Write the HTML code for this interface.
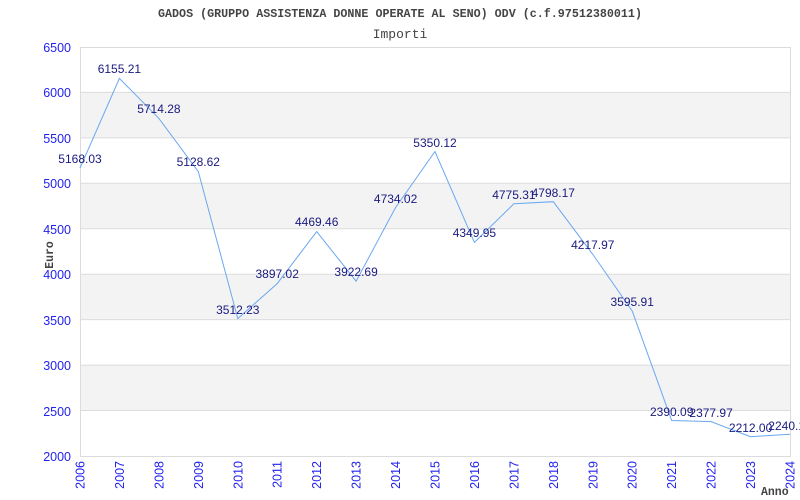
<!DOCTYPE html>
<html><head><meta charset="utf-8"><style>html,body{margin:0;padding:0;background:#fff}svg{display:block}</style></head><body>
<svg width="800" height="500" viewBox="0 0 800 500" xmlns="http://www.w3.org/2000/svg">
<rect width="800" height="500" fill="#fff"/>
<g fill="#f3f3f3">
<rect x="80.5" y="92.4" width="710" height="45.4"/>
<rect x="80.5" y="183.3" width="710" height="45.4"/>
<rect x="80.5" y="274.2" width="710" height="45.4"/>
<rect x="80.5" y="365.1" width="710" height="45.4"/>
</g>
<g stroke="#dcdcdc" stroke-width="1">
<line x1="80" y1="92.4" x2="790" y2="92.4"/>
<line x1="80" y1="137.9" x2="790" y2="137.9"/>
<line x1="80" y1="183.3" x2="790" y2="183.3"/>
<line x1="80" y1="228.8" x2="790" y2="228.8"/>
<line x1="80" y1="274.2" x2="790" y2="274.2"/>
<line x1="80" y1="319.6" x2="790" y2="319.6"/>
<line x1="80" y1="365.1" x2="790" y2="365.1"/>
<line x1="80" y1="410.5" x2="790" y2="410.5"/>
<rect x="80.5" y="47.5" width="710" height="409" fill="none"/>
</g>
<polyline fill="none" stroke="#6aa8f0" stroke-width="1" points="80,168.1 119.4,78.4 158.9,118.4 198.3,171.6 237.8,318.6 277.2,283.6 316.7,231.6 356.1,281.2 395.6,207.5 435,151.5 474.4,242.4 513.9,203.8 553.3,201.7 592.8,254.4 632.2,311 671.7,420.5 711.1,421.6 750.6,436.7 790,434.2"/>
<g font-family="Liberation Sans, sans-serif" font-size="12" fill="#1a1a80" text-anchor="middle">
<text x="80" y="163">5168.03</text>
<text x="119.4" y="73">6155.21</text>
<text x="158.9" y="113">5714.28</text>
<text x="198.3" y="166">5128.62</text>
<text x="237.8" y="314">3512.23</text>
<text x="277.2" y="278">3897.02</text>
<text x="316.7" y="226">4469.46</text>
<text x="356.1" y="276">3922.69</text>
<text x="395.6" y="203">4734.02</text>
<text x="435" y="147">5350.12</text>
<text x="474.4" y="237">4349.95</text>
<text x="513.9" y="199">4775.31</text>
<text x="553.3" y="197">4798.17</text>
<text x="592.8" y="249">4217.97</text>
<text x="632.2" y="306">3595.91</text>
<text x="671.7" y="416">2390.09</text>
<text x="711.1" y="417">2377.97</text>
<text x="750.6" y="432">2212.00</text>
<text x="790" y="430">2240.17</text>
</g>
<g font-family="Liberation Sans, sans-serif" font-size="12.5" fill="#2222ee" text-anchor="end">
<text x="71" y="52">6500</text>
<text x="71" y="97">6000</text>
<text x="71" y="143">5500</text>
<text x="71" y="188">5000</text>
<text x="71" y="234">4500</text>
<text x="71" y="279">4000</text>
<text x="71" y="325">3500</text>
<text x="71" y="370">3000</text>
<text x="71" y="416">2500</text>
<text x="71" y="461">2000</text>
</g>
<g font-family="Liberation Sans, sans-serif" font-size="12.5" fill="#2222ee" text-anchor="end">
<text transform="translate(84.5,461) rotate(-90)">2006</text>
<text transform="translate(123.9,461) rotate(-90)">2007</text>
<text transform="translate(163.4,461) rotate(-90)">2008</text>
<text transform="translate(202.8,461) rotate(-90)">2009</text>
<text transform="translate(242.3,461) rotate(-90)">2010</text>
<text transform="translate(281.7,461) rotate(-90)">2011</text>
<text transform="translate(321.2,461) rotate(-90)">2012</text>
<text transform="translate(360.6,461) rotate(-90)">2013</text>
<text transform="translate(400.1,461) rotate(-90)">2014</text>
<text transform="translate(439.5,461) rotate(-90)">2015</text>
<text transform="translate(478.9,461) rotate(-90)">2016</text>
<text transform="translate(518.4,461) rotate(-90)">2017</text>
<text transform="translate(557.8,461) rotate(-90)">2018</text>
<text transform="translate(597.3,461) rotate(-90)">2019</text>
<text transform="translate(636.7,461) rotate(-90)">2020</text>
<text transform="translate(676.2,461) rotate(-90)">2021</text>
<text transform="translate(715.6,461) rotate(-90)">2022</text>
<text transform="translate(755.1,461) rotate(-90)">2023</text>
<text transform="translate(794.5,461) rotate(-90)">2024</text>
</g>
<text x="400" y="17" text-anchor="middle" font-family="Liberation Mono, monospace" font-weight="bold" font-size="11.7" fill="#444">GADOS (GRUPPO ASSISTENZA DONNE OPERATE AL SENO) ODV (c.f.97512380011)</text>
<text x="400" y="38" text-anchor="middle" font-family="Liberation Mono, monospace" font-size="13" fill="#444">Importi</text>
<text transform="translate(53,255) rotate(-90)" text-anchor="middle" font-family="Liberation Mono, monospace" font-weight="bold" font-size="11.5" fill="#444">Euro</text>
<text x="761" y="495" font-family="Liberation Mono, monospace" font-weight="bold" font-size="11.5" fill="#444">Anno</text>
</svg>
</body></html>
